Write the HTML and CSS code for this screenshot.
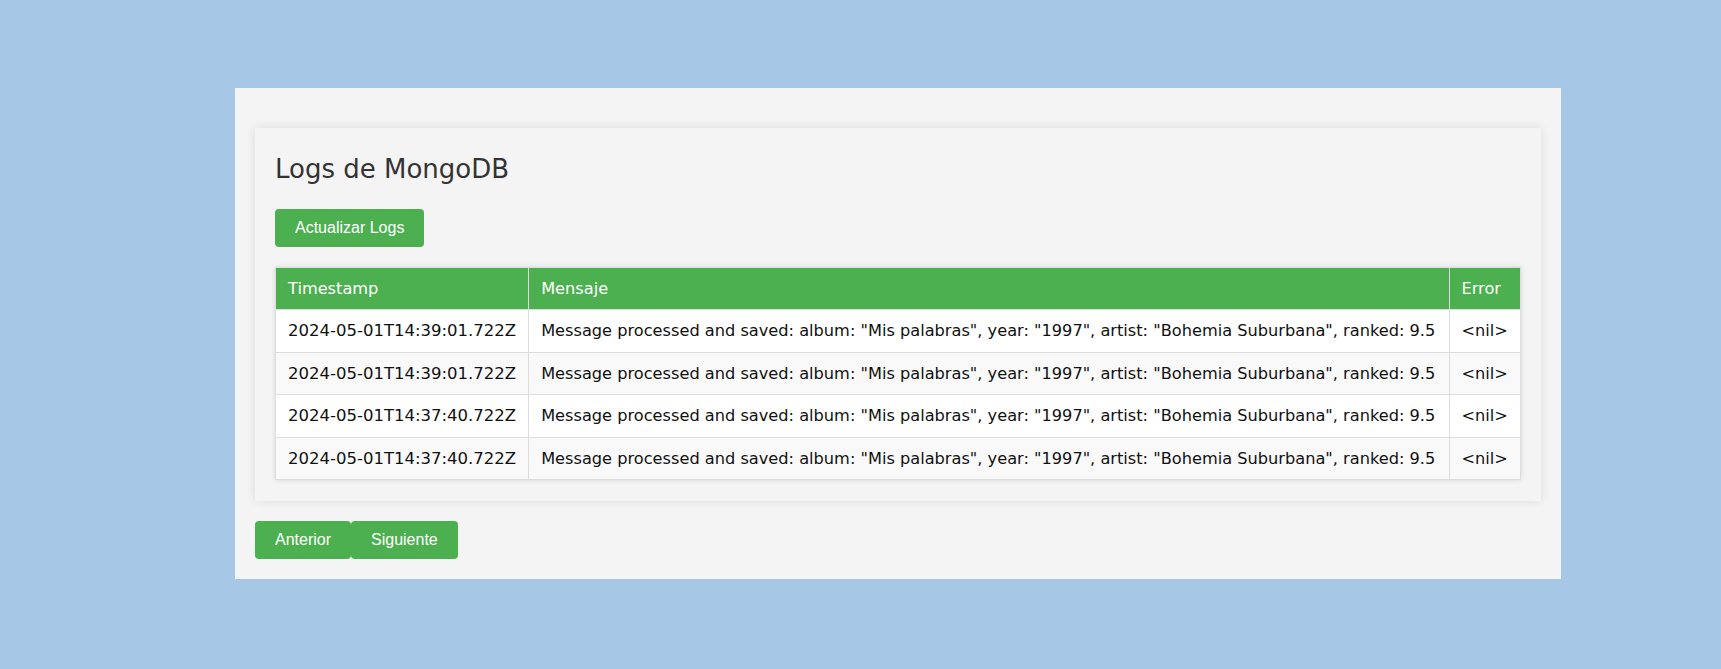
FILE: index.html
```html
<!DOCTYPE html>
<html lang="es">
<head>
<meta charset="utf-8">
<title>Logs de MongoDB</title>
<link rel="stylesheet" href="styles.css">
</head>
<body>
<div class="panel">
  <div class="card">
    <h2 class="title">Logs de MongoDB</h2>
    <button class="btn btn-refresh">Actualizar Logs</button>
    <table class="logs">
      <thead>
        <tr><th class="col-time">Timestamp</th><th>Mensaje</th><th class="col-err">Error</th></tr>
      </thead>
      <tbody>
        <tr><td class="ts">2024-05-01T14:39:01.722Z</td><td>Message processed and saved: album: "Mis palabras", year: "1997", artist: "Bohemia Suburbana", ranked: 9.5</td><td class="err">&lt;nil&gt;</td></tr>
        <tr><td class="ts">2024-05-01T14:39:01.722Z</td><td>Message processed and saved: album: "Mis palabras", year: "1997", artist: "Bohemia Suburbana", ranked: 9.5</td><td class="err">&lt;nil&gt;</td></tr>
        <tr><td class="ts">2024-05-01T14:37:40.722Z</td><td>Message processed and saved: album: "Mis palabras", year: "1997", artist: "Bohemia Suburbana", ranked: 9.5</td><td class="err">&lt;nil&gt;</td></tr>
        <tr><td class="ts">2024-05-01T14:37:40.722Z</td><td>Message processed and saved: album: "Mis palabras", year: "1997", artist: "Bohemia Suburbana", ranked: 9.5</td><td class="err">&lt;nil&gt;</td></tr>
      </tbody>
    </table>
  </div>
  <div class="pager">
    <button class="btn">Anterior</button><button class="btn">Siguiente</button>
  </div>
</div>
</body>
</html>
```

FILE: styles.css
```css
html, body {
  margin: 0;
  padding: 0;
}
body {
  background: #a7c7e7;
  font-family: "DejaVu Sans", Verdana, sans-serif;
  min-height: 669px;
  padding-top: 88px;
  box-sizing: border-box;
}
.panel {
  margin-left: 235px;
  width: 1326px;
  box-sizing: border-box;
  background: #f4f4f4;
  padding: 40px 20px 20px;
}
.card {
  background: #f4f4f4;
  box-shadow: 0 0 10px rgba(0, 0, 0, 0.1);
  padding: 26px 20px 21px;
}
.title {
  margin: 0 0 25px;
  font-size: 26px;
  font-weight: normal;
  color: #333;
  line-height: 30px;
}
.btn {
  display: inline-block;
  background: #4caf50;
  color: #fff;
  border: none;
  border-radius: 4px;
  font-family: "Liberation Sans", Arial, sans-serif;
  font-size: 16px;
  line-height: 18px;
  padding: 10px 20px;
  margin: 0;
  cursor: pointer;
}
.btn-refresh {
  display: block;
  margin-bottom: 20px;
}
.logs {
  width: 100%;
  border-collapse: collapse;
  background: #fff;
  box-shadow: 0 0 5px rgba(0, 0, 0, 0.12);
  font-size: 16.2px;
}
.logs th,
.logs td {
  padding: 12px 12px;
  border: 1px solid #ddd;
  text-align: left;
  line-height: 18px;
  white-space: nowrap;
}
.logs th {
  background: #4caf50;
  color: #fff;
  font-weight: normal;
  padding: 12px 12px 11px;
}
.logs th.col-time {
  width: 228px;
}
.logs td {
  color: #111;
  padding: 12px 12px 11.5px;
}
.logs td.ts {
  font-size: 16.5px;
}
.logs tbody tr:nth-child(even) td {
  background: #f9f9f9;
}
.pager {
  display: flex;
  margin-top: 20px;
}
```
